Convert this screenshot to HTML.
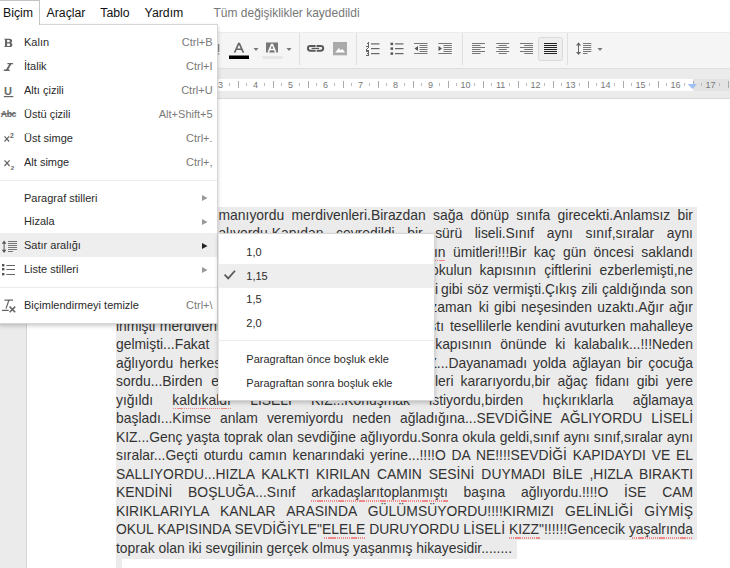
<!DOCTYPE html><html><head><meta charset="utf-8"><style>
*{margin:0;padding:0;box-sizing:border-box}
html,body{width:730px;height:568px;overflow:hidden;background:#fff;font-family:"Liberation Sans",sans-serif}
.t{position:absolute;white-space:nowrap}
.a{position:absolute}
</style></head><body>
<div class="a" style="left:0;top:99px;width:26px;height:469px;background:#ebebeb"></div>
<div class="a" style="left:26px;top:99px;width:1px;height:469px;background:#d4d4d4"></div>
<div class="a" style="left:116px;top:207px;width:581px;height:333.0px;background:#ebebeb"></div>
<div class="a" style="left:116px;top:540.0px;width:400.7px;height:18.5px;background:#ebebeb"></div>
<div class="a" style="left:116px;top:558.5px;width:6px;height:20px;background:#ebebeb"></div>
<div class="t" style="left:218.50px;top:205.63px;font-size:13.9px;line-height:18.5px;color:#333;width:474.50px;text-align:justify;text-align-last:justify;">manıyordu merdivenleri.Birazdan sağa dönüp sınıfa girecekti.Anlamsız bir</div>
<div class="t" style="left:218.40px;top:224.13px;font-size:13.9px;line-height:18.5px;color:#333;width:474.60px;text-align:justify;text-align-last:justify;">alıyordu.Kapıdan çevredildi bir sürü liseli.Sınıf aynı sınıf,sıralar aynı</div>
<div class="t" style="right:284.50px;top:242.63px;font-size:13.9px;line-height:18.5px;color:#333;text-align:right;white-space:nowrap;">umutların</div>
<div class="t" style="left:453.00px;top:242.63px;font-size:13.9px;line-height:18.5px;color:#333;width:240.00px;text-align:justify;text-align-last:justify;">ümitleri!!!Bir kaç gün öncesi saklandı</div>
<div class="t" style="right:258.00px;top:261.13px;font-size:13.9px;line-height:18.5px;color:#333;text-align:right;white-space:nowrap;">okulun</div>
<div class="t" style="left:479.50px;top:261.13px;font-size:13.9px;line-height:18.5px;color:#333;width:213.50px;text-align:justify;text-align-last:justify;">kapısının çiftlerini ezberlemişti,ne</div>
<div class="t" style="right:292.00px;top:279.63px;font-size:13.9px;line-height:18.5px;color:#333;text-align:right;white-space:nowrap;">yemini</div>
<div class="t" style="left:441.00px;top:279.63px;font-size:13.9px;line-height:18.5px;color:#333;width:252.00px;text-align:justify;text-align-last:justify;">gibi söz vermişti.Çıkış zili çaldığında son</div>
<div class="t" style="right:258.00px;top:298.13px;font-size:13.9px;line-height:18.5px;color:#333;text-align:right;white-space:nowrap;">zaman</div>
<div class="t" style="left:478.80px;top:298.13px;font-size:13.9px;line-height:18.5px;color:#333;width:214.20px;text-align:justify;text-align-last:justify;">ki gibi neşesinden uzaktı.Ağır ağır</div>
<div class="t" style="left:116.00px;top:316.63px;font-size:13.9px;line-height:18.5px;color:#333;white-space:nowrap;word-spacing:0.6px;white-space:nowrap;">inmişti merdivenlerden</div>
<div class="t" style="right:286.00px;top:316.63px;font-size:13.9px;line-height:18.5px;color:#333;text-align:right;white-space:nowrap;">ağlamıştı</div>
<div class="t" style="left:450.00px;top:316.63px;font-size:13.9px;line-height:18.5px;color:#333;width:243.00px;text-align:justify;text-align-last:justify;">tesellilerle kendini avuturken mahalleye</div>
<div class="t" style="left:116.00px;top:335.13px;font-size:13.9px;line-height:18.5px;color:#333;white-space:nowrap;word-spacing:8px;white-space:nowrap;">gelmişti...Fakat okulun</div>
<div class="t" style="left:435.20px;top:335.13px;font-size:13.9px;line-height:18.5px;color:#333;width:257.80px;text-align:justify;text-align-last:justify;">kapısının önünde ki kalabalık...!!!Neden</div>
<div class="t" style="left:116.00px;top:353.63px;font-size:13.9px;line-height:18.5px;color:#333;white-space:nowrap;word-spacing:2.5px;white-space:nowrap;">ağlıyordu herkes</div>
<div class="t" style="right:281.60px;top:353.63px;font-size:13.9px;line-height:18.5px;color:#333;text-align:right;white-space:nowrap;">KIZ...</div>
<div class="t" style="left:448.40px;top:353.63px;font-size:13.9px;line-height:18.5px;color:#333;width:244.60px;text-align:justify;text-align-last:justify;">Dayanamadı yolda ağlayan bir çocuğa</div>
<div class="t" style="left:116.00px;top:372.13px;font-size:13.9px;line-height:18.5px;color:#333;white-space:nowrap;word-spacing:5px;white-space:nowrap;">sordu...Birden etraf</div>
<div class="t" style="right:276.50px;top:372.13px;font-size:13.9px;line-height:18.5px;color:#333;text-align:right;white-space:nowrap;">gözleri</div>
<div class="t" style="left:460.50px;top:372.13px;font-size:13.9px;line-height:18.5px;color:#333;width:232.50px;text-align:justify;text-align-last:justify;">kararıyordu,bir ağaç fidanı gibi yere</div>
<div class="t" style="left:116.00px;top:390.63px;font-size:13.9px;line-height:18.5px;color:#333;width:577.00px;text-align:justify;text-align-last:justify;">yığıldı kaldıkaldı LİSELİ KIZ...Konuşmak istiyordu,birden hıçkırıklarla ağlamaya</div>
<div class="t" style="left:116.00px;top:409.13px;font-size:13.9px;line-height:18.5px;color:#333;width:577.00px;text-align:justify;text-align-last:justify;">başladı...Kimse anlam veremiyordu neden ağladığına...SEVDİĞİNE AĞLIYORDU LİSELİ</div>
<div class="t" style="left:116.00px;top:427.63px;font-size:13.9px;line-height:18.5px;color:#333;width:577.00px;text-align:justify;text-align-last:justify;">KIZ...Genç yaşta toprak olan sevdiğine ağlıyordu.Sonra okula geldi,sınıf aynı sınıf,sıralar aynı</div>
<div class="t" style="left:116.00px;top:446.13px;font-size:13.9px;line-height:18.5px;color:#333;width:577.00px;text-align:justify;text-align-last:justify;">sıralar...Geçti oturdu camın kenarındaki yerine...!!!!O DA NE!!!!SEVDİĞİ KAPIDAYDI VE EL</div>
<div class="t" style="left:116.00px;top:464.63px;font-size:13.9px;line-height:18.5px;color:#333;width:577.00px;text-align:justify;text-align-last:justify;">SALLIYORDU...HIZLA KALKTI KIRILAN CAMIN SESİNİ DUYMADI BİLE ,HIZLA BIRAKTI</div>
<div class="t" style="left:116.00px;top:483.13px;font-size:13.9px;line-height:18.5px;color:#333;width:577.00px;text-align:justify;text-align-last:justify;">KENDİNİ BOŞLUĞA...Sınıf arkadaşlarıtoplanmıştı başına ağlıyordu.!!!!O İSE CAM</div>
<div class="t" style="left:116.00px;top:501.63px;font-size:13.9px;line-height:18.5px;color:#333;width:577.00px;text-align:justify;text-align-last:justify;">KIRIKLARIYLA KANLAR ARASINDA GÜLÜMSÜYORDU!!!!KIRMIZI GELİNLİĞİ GİYMİŞ</div>
<div class="t" style="left:116.00px;top:520.13px;font-size:13.9px;line-height:18.5px;color:#333;width:577.00px;text-align:justify;text-align-last:justify;">OKUL KAPISINDA SEVDİĞİYLE&quot;ELELE DURUYORDU LİSELİ KIZZ&quot;!!!!!!Gencecik yaşalrında</div>
<div class="t" style="left:116.00px;top:538.63px;font-size:13.9px;line-height:18.5px;color:#333;white-space:nowrap;">toprak olan iki sevgilinin gerçek olmuş yaşanmış hikayesidir........</div>
<div class="a" style="left:433.0px;top:259.5px;width:12.0px;height:1.6px;opacity:.6;background:repeating-linear-gradient(to right,#f04848 0 1.3px,transparent 1.3px 2.1px)"></div>
<div class="a" style="left:172.6px;top:407.5px;width:58.4px;height:1.6px;opacity:.6;background:repeating-linear-gradient(to right,#f04848 0 1.3px,transparent 1.3px 2.1px)"></div>
<div class="a" style="left:311.4px;top:500.0px;width:137.1px;height:1.6px;opacity:.6;background:repeating-linear-gradient(to right,#f04848 0 1.3px,transparent 1.3px 2.1px)"></div>
<div class="a" style="left:323.7px;top:537.0px;width:41.9px;height:1.6px;opacity:.6;background:repeating-linear-gradient(to right,#f04848 0 1.3px,transparent 1.3px 2.1px)"></div>
<div class="a" style="left:508.9px;top:537.0px;width:30.8px;height:1.6px;opacity:.6;background:repeating-linear-gradient(to right,#f04848 0 1.3px,transparent 1.3px 2.1px)"></div>
<div class="a" style="left:632.2px;top:537.0px;width:60.4px;height:1.6px;opacity:.6;background:repeating-linear-gradient(to right,#f04848 0 1.3px,transparent 1.3px 2.1px)"></div>
<div class="a" style="left:0;top:0;width:730px;height:32px;background:#fff"></div>
<div class="t" style="left:3.00px;top:4.64px;font-size:12.3px;line-height:17px;color:#111;transform:scaleY(1.03);transform-origin:0 12.76px;">Biçim</div>
<div class="t" style="left:46.50px;top:4.64px;font-size:12.3px;line-height:17px;color:#111;transform:scaleY(1.03);transform-origin:0 12.76px;">Araçlar</div>
<div class="t" style="left:100.30px;top:4.64px;font-size:12.3px;line-height:17px;color:#111;transform:scaleY(1.03);transform-origin:0 12.76px;">Tablo</div>
<div class="t" style="left:144.60px;top:4.64px;font-size:12.3px;line-height:17px;color:#111;transform:scaleY(1.03);transform-origin:0 12.76px;">Yardım</div>
<div class="t" style="left:213.50px;top:4.54px;font-size:12px;line-height:17px;color:#777;transform:scaleY(1.05);transform-origin:0 12.66px;">Tüm değişiklikler kaydedildi</div>
<div class="a" style="left:0;top:32px;width:730px;height:37px;background:#f5f5f5;border-top:1px solid #ececec;border-bottom:1px solid #e0e0e0"></div>
<div class="a" style="left:0;top:69px;width:730px;height:30px;background:#ebebeb;border-bottom:1px solid #d8d8d8"></div>
<div class="a" style="left:26px;top:78.5px;width:704px;height:12.3px;background:#e3e3e3"></div>
<div class="a" style="left:116px;top:78.5px;width:576.5px;height:12.3px;background:#fff"></div>
<svg class="a" style="left:0;top:0" width="730" height="100"><rect x="229" y="83" width="1" height="3" fill="#bbb"/><rect x="238" y="81" width="1" height="7" fill="#aaa"/><rect x="246" y="83" width="1" height="3" fill="#bbb"/><rect x="264" y="83" width="1" height="3" fill="#bbb"/><rect x="273" y="81" width="1" height="7" fill="#aaa"/><rect x="281" y="83" width="1" height="3" fill="#bbb"/><rect x="299" y="83" width="1" height="3" fill="#bbb"/><rect x="308" y="81" width="1" height="7" fill="#aaa"/><rect x="316" y="83" width="1" height="3" fill="#bbb"/><rect x="334" y="83" width="1" height="3" fill="#bbb"/><rect x="343" y="81" width="1" height="7" fill="#aaa"/><rect x="351" y="83" width="1" height="3" fill="#bbb"/><rect x="369" y="83" width="1" height="3" fill="#bbb"/><rect x="378" y="81" width="1" height="7" fill="#aaa"/><rect x="386" y="83" width="1" height="3" fill="#bbb"/><rect x="404" y="83" width="1" height="3" fill="#bbb"/><rect x="413" y="81" width="1" height="7" fill="#aaa"/><rect x="421" y="83" width="1" height="3" fill="#bbb"/><rect x="439" y="83" width="1" height="3" fill="#bbb"/><rect x="448" y="81" width="1" height="7" fill="#aaa"/><rect x="456" y="83" width="1" height="3" fill="#bbb"/><rect x="474" y="83" width="1" height="3" fill="#bbb"/><rect x="483" y="81" width="1" height="7" fill="#aaa"/><rect x="491" y="83" width="1" height="3" fill="#bbb"/><rect x="509" y="83" width="1" height="3" fill="#bbb"/><rect x="518" y="81" width="1" height="7" fill="#aaa"/><rect x="526" y="83" width="1" height="3" fill="#bbb"/><rect x="544" y="83" width="1" height="3" fill="#bbb"/><rect x="553" y="81" width="1" height="7" fill="#aaa"/><rect x="561" y="83" width="1" height="3" fill="#bbb"/><rect x="579" y="83" width="1" height="3" fill="#bbb"/><rect x="588" y="81" width="1" height="7" fill="#aaa"/><rect x="596" y="83" width="1" height="3" fill="#bbb"/><rect x="614" y="83" width="1" height="3" fill="#bbb"/><rect x="623" y="81" width="1" height="7" fill="#aaa"/><rect x="631" y="83" width="1" height="3" fill="#bbb"/><rect x="649" y="83" width="1" height="3" fill="#bbb"/><rect x="658" y="81" width="1" height="7" fill="#aaa"/><rect x="666" y="83" width="1" height="3" fill="#bbb"/><rect x="684" y="83" width="1" height="3" fill="#bbb"/><rect x="693" y="81" width="1" height="7" fill="#aaa"/><rect x="701" y="83" width="1" height="3" fill="#bbb"/><rect x="719" y="83" width="1" height="3" fill="#bbb"/><rect x="728" y="81" width="1" height="7" fill="#aaa"/><polygon points="687.8,84 697,84 692.4,89" fill="#9fbff5"/></svg>
<div class="t" style="left:200.60px;top:78.68px;font-size:9px;line-height:13px;color:#777;width:40.00px;text-align:center;">3</div>
<div class="t" style="left:235.60px;top:78.68px;font-size:9px;line-height:13px;color:#777;width:40.00px;text-align:center;">4</div>
<div class="t" style="left:270.60px;top:78.68px;font-size:9px;line-height:13px;color:#777;width:40.00px;text-align:center;">5</div>
<div class="t" style="left:305.60px;top:78.68px;font-size:9px;line-height:13px;color:#777;width:40.00px;text-align:center;">6</div>
<div class="t" style="left:340.60px;top:78.68px;font-size:9px;line-height:13px;color:#777;width:40.00px;text-align:center;">7</div>
<div class="t" style="left:375.60px;top:78.68px;font-size:9px;line-height:13px;color:#777;width:40.00px;text-align:center;">8</div>
<div class="t" style="left:410.60px;top:78.68px;font-size:9px;line-height:13px;color:#777;width:40.00px;text-align:center;">9</div>
<div class="t" style="left:445.60px;top:78.68px;font-size:9px;line-height:13px;color:#777;width:40.00px;text-align:center;">10</div>
<div class="t" style="left:480.60px;top:78.68px;font-size:9px;line-height:13px;color:#777;width:40.00px;text-align:center;">11</div>
<div class="t" style="left:515.60px;top:78.68px;font-size:9px;line-height:13px;color:#777;width:40.00px;text-align:center;">12</div>
<div class="t" style="left:550.60px;top:78.68px;font-size:9px;line-height:13px;color:#777;width:40.00px;text-align:center;">13</div>
<div class="t" style="left:585.60px;top:78.68px;font-size:9px;line-height:13px;color:#777;width:40.00px;text-align:center;">14</div>
<div class="t" style="left:620.60px;top:78.68px;font-size:9px;line-height:13px;color:#777;width:40.00px;text-align:center;">15</div>
<div class="t" style="left:655.60px;top:78.68px;font-size:9px;line-height:13px;color:#777;width:40.00px;text-align:center;">16</div>
<div class="t" style="left:690.60px;top:78.68px;font-size:9px;line-height:13px;color:#777;width:40.00px;text-align:center;">17</div>
<svg class="a" style="left:0;top:0" width="730" height="70"><rect x="218" y="44" width="1.3" height="8" fill="#888"/><rect x="218" y="53.2" width="1.3" height="1.3" fill="#888"/><path d="M234.6,52.6 L238.6,43.6 L239.4,43.6 L243.4,52.6 M236.3,49.3 L241.7,49.3" stroke="#666" stroke-width="1.6" fill="none"/><rect x="229" y="55.5" width="20" height="3.5" fill="#000"/><polygon points="253.5,48 258.5,48 256,51" fill="#777"/><rect x="266" y="42.5" width="12" height="10" fill="#777"/><path d="M268.2,52.6 L271.6,44.4 L272.4,44.4 L275.8,52.6 M269.6,49.4 L274.4,49.4" stroke="#fff" stroke-width="1.5" fill="none"/><rect x="262.5" y="56" width="20" height="3" fill="#e6e6e6"/><polygon points="286.5,48 291.5,48 289,51" fill="#777"/><rect x="299.0" y="33" width="1" height="32" fill="#e0e0e0"/><rect x="356.0" y="33" width="1" height="32" fill="#e0e0e0"/><rect x="462.0" y="33" width="1" height="32" fill="#e0e0e0"/><rect x="567.0" y="33" width="1" height="32" fill="#e0e0e0"/><path d="M315.6,45.9 H310.35 A2.45,2.45 0 0 0 310.35,50.8 H315.6 M316.6,45.9 H320.75 A2.45,2.45 0 0 1 320.75,50.8 H316.6" stroke="#5a5a5a" stroke-width="2" fill="none"/><rect x="311.6" y="47.8" width="7.5" height="1.2" fill="#5a5a5a"/><rect x="333" y="42" width="14" height="13.3" fill="#aaa"/><polygon points="335.2,52.6 338.9,47.9 340.5,50.2 342.5,49 345.1,52.6" fill="#fff"/><path fill="#666" d="M368,42h1v4h-1z M367,43h1v1h-1z M366,46h3v1h-3z M368,47h1v1h-1z M367,48h1v1h-1z M366,49h1v1h-1z M366,50h3v1h-3z M366,51h3v1h-3z M368,52h1v3h-1z M367,53h1v1h-1z M366,55h3v1h-3z"/><rect x="371" y="43.3" width="8.5" height="1.2" fill="#666"/><rect x="390.5" y="42.699999999999996" width="2.6" height="2.4" fill="#555"/><rect x="395" y="43.3" width="8.5" height="1.2" fill="#666"/><rect x="371" y="48" width="8.5" height="1.2" fill="#666"/><rect x="390.5" y="47.4" width="2.6" height="2.4" fill="#555"/><rect x="395" y="48" width="8.5" height="1.2" fill="#666"/><rect x="371" y="53" width="8.5" height="1.2" fill="#666"/><rect x="390.5" y="52.4" width="2.6" height="2.4" fill="#555"/><rect x="395" y="53" width="8.5" height="1.2" fill="#666"/><rect x="414" y="43" width="13.5" height="1" fill="#777"/><rect x="438.3" y="43" width="13.5" height="1" fill="#777"/><rect x="419.5" y="45" width="8" height="1" fill="#777"/><rect x="443.5" y="45" width="8.3" height="1" fill="#777"/><rect x="419.5" y="47" width="8" height="1" fill="#777"/><rect x="443.5" y="47" width="8.3" height="1" fill="#777"/><rect x="419.5" y="49" width="8" height="1" fill="#777"/><rect x="443.5" y="49" width="8.3" height="1" fill="#777"/><rect x="419.5" y="51" width="8" height="1" fill="#777"/><rect x="443.5" y="51" width="8.3" height="1" fill="#777"/><rect x="414" y="53" width="13.5" height="1" fill="#777"/><rect x="438.3" y="53" width="13.5" height="1" fill="#777"/><polygon points="418,46 418,51 414.5,48.5" fill="#555"/><polygon points="438.5,46 438.5,51 442,48.5" fill="#555"/><rect x="472" y="43" width="13" height="1" fill="#777"/><rect x="496.2" y="43" width="13" height="1" fill="#777"/><rect x="520" y="43" width="13" height="1" fill="#777"/><rect x="472" y="45" width="8.5" height="1" fill="#777"/><rect x="498.7" y="45" width="8" height="1" fill="#777"/><rect x="524.2" y="45" width="8.8" height="1" fill="#777"/><rect x="472" y="47" width="13" height="1" fill="#777"/><rect x="496.2" y="47" width="13" height="1" fill="#777"/><rect x="520" y="47" width="13" height="1" fill="#777"/><rect x="472" y="49" width="8.5" height="1" fill="#777"/><rect x="498.7" y="49" width="8" height="1" fill="#777"/><rect x="524.2" y="49" width="8.8" height="1" fill="#777"/><rect x="472" y="51" width="13" height="1" fill="#777"/><rect x="496.2" y="51" width="13" height="1" fill="#777"/><rect x="520" y="51" width="13" height="1" fill="#777"/><rect x="472" y="53" width="8.5" height="1" fill="#777"/><rect x="498.7" y="53" width="8" height="1" fill="#777"/><rect x="524.2" y="53" width="8.8" height="1" fill="#777"/><rect x="538.5" y="37.5" width="24" height="23" rx="2" fill="#eeeeee" stroke="#dadada" stroke-width="1"/><rect x="544" y="43" width="13" height="1" fill="#222"/><rect x="544" y="45" width="13" height="1" fill="#222"/><rect x="544" y="47" width="13" height="1" fill="#222"/><rect x="544" y="49" width="13" height="1" fill="#222"/><rect x="544" y="51" width="13" height="1" fill="#222"/><rect x="544" y="53" width="13" height="1" fill="#222"/><rect x="578" y="44" width="1" height="10" fill="#666"/><polygon points="576,45.6 581.2,45.6 578.5,42.2" fill="#666"/><polygon points="576,52 581.2,52 578.5,55" fill="#666"/><rect x="583" y="43" width="8.3" height="1" fill="#777"/><rect x="583" y="45" width="8.3" height="1" fill="#777"/><rect x="583" y="47" width="8.3" height="1" fill="#777"/><rect x="583" y="49" width="8.3" height="1" fill="#777"/><rect x="583" y="51" width="8.3" height="1" fill="#777"/><rect x="583" y="53" width="4.5" height="1" fill="#777"/><polygon points="597.5,48 602.5,48 600,51" fill="#777"/></svg>
<div class="a" style="left:-1px;top:24px;width:219px;height:300px;background:#fff;border:1px solid #d6d6d6;box-shadow:0 2px 4px rgba(0,0,0,.2)"></div>
<div class="a" style="left:-1px;top:0;width:41px;height:25px;background:#fff;border:1px solid #c4c4c4;border-bottom:none"></div>
<div class="t" style="left:3.00px;top:4.64px;font-size:12.3px;line-height:17px;color:#111;transform:scaleY(1.03);transform-origin:0 12.76px;">Biçim</div>
<div class="a" style="left:0;top:233px;width:217px;height:24px;background:#eeeeee"></div>
<div class="a" style="left:0;top:180px;width:217px;height:1px;background:#ebebeb"></div>
<div class="a" style="left:0;top:287px;width:217px;height:1px;background:#ebebeb"></div>
<div class="t" style="left:24.00px;top:35.19px;font-size:11px;line-height:15px;color:#2a2a2a;transform:scaleY(1.05);transform-origin:0 11.31px;">Kalın</div>
<div class="t" style="right:517.40px;top:35.19px;font-size:11px;line-height:15px;color:#7a7a7a;text-align:right;transform:scaleY(1.05);transform-origin:0 11.31px;">Ctrl+B</div>
<div class="t" style="left:24.00px;top:59.19px;font-size:11px;line-height:15px;color:#2a2a2a;transform:scaleY(1.05);transform-origin:0 11.31px;">İtalik</div>
<div class="t" style="right:517.40px;top:59.19px;font-size:11px;line-height:15px;color:#7a7a7a;text-align:right;transform:scaleY(1.05);transform-origin:0 11.31px;">Ctrl+I</div>
<div class="t" style="left:24.00px;top:83.19px;font-size:11px;line-height:15px;color:#2a2a2a;transform:scaleY(1.05);transform-origin:0 11.31px;">Altı çizili</div>
<div class="t" style="right:517.40px;top:83.19px;font-size:11px;line-height:15px;color:#7a7a7a;text-align:right;transform:scaleY(1.05);transform-origin:0 11.31px;">Ctrl+U</div>
<div class="t" style="left:24.00px;top:107.19px;font-size:11px;line-height:15px;color:#2a2a2a;transform:scaleY(1.05);transform-origin:0 11.31px;">Üstü çizili</div>
<div class="t" style="right:517.40px;top:107.19px;font-size:11px;line-height:15px;color:#7a7a7a;text-align:right;transform:scaleY(1.05);transform-origin:0 11.31px;">Alt+Shift+5</div>
<div class="t" style="left:24.00px;top:131.19px;font-size:11px;line-height:15px;color:#2a2a2a;transform:scaleY(1.05);transform-origin:0 11.31px;">Üst simge</div>
<div class="t" style="right:517.40px;top:131.19px;font-size:11px;line-height:15px;color:#7a7a7a;text-align:right;transform:scaleY(1.05);transform-origin:0 11.31px;">Ctrl+.</div>
<div class="t" style="left:24.00px;top:155.19px;font-size:11px;line-height:15px;color:#2a2a2a;transform:scaleY(1.05);transform-origin:0 11.31px;">Alt simge</div>
<div class="t" style="right:517.40px;top:155.19px;font-size:11px;line-height:15px;color:#7a7a7a;text-align:right;transform:scaleY(1.05);transform-origin:0 11.31px;">Ctrl+,</div>
<div class="t" style="left:24.00px;top:190.99px;font-size:11px;line-height:15px;color:#2a2a2a;transform:scaleY(1.05);transform-origin:0 11.31px;">Paragraf stilleri</div>
<div class="t" style="left:24.00px;top:214.19px;font-size:11px;line-height:15px;color:#2a2a2a;transform:scaleY(1.05);transform-origin:0 11.31px;">Hizala</div>
<div class="t" style="left:24.00px;top:238.19px;font-size:11px;line-height:15px;color:#2a2a2a;transform:scaleY(1.05);transform-origin:0 11.31px;">Satır aralığı</div>
<div class="t" style="left:24.00px;top:262.19px;font-size:11px;line-height:15px;color:#2a2a2a;transform:scaleY(1.05);transform-origin:0 11.31px;">Liste stilleri</div>
<div class="t" style="left:24.00px;top:298.19px;font-size:11px;line-height:15px;color:#2a2a2a;transform:scaleY(1.05);transform-origin:0 11.31px;">Biçimlendirmeyi temizle</div>
<div class="t" style="right:517.40px;top:298.19px;font-size:11px;line-height:15px;color:#7a7a7a;text-align:right;transform:scaleY(1.05);transform-origin:0 11.31px;">Ctrl+\</div>
<svg class="a" style="left:0;top:0" width="220" height="330"><polygon points="202,195 202,201 207.5,198" fill="#999"/><polygon points="202,219 202,225 207.5,222" fill="#999"/><polygon points="202,243 202,249 207.5,246" fill="#222"/><polygon points="202,267 202,273 207.5,270" fill="#999"/><path fill-rule="evenodd" fill="#666" d="M4.2,38.8 H9.6 C11.4,38.8 12.1,39.8 12.1,40.9 C12.1,41.8 11.5,42.5 10.7,42.8 C11.8,43.1 12.4,43.9 12.4,44.9 C12.4,46.2 11.5,47 9.8,47 H4.2 V46.2 H5 V39.6 H4.2 Z M7.1,39.9 H8.9 C9.5,39.9 9.8,40.4 9.8,41 C9.8,41.7 9.5,42.2 8.9,42.2 H7.1 Z M7.1,43.4 H9.1 C9.8,43.4 10.1,44 10.1,44.7 C10.1,45.4 9.8,45.9 9.1,45.9 H7.1 Z"/><path fill="#666" d="M7.4,62.9 H13.1 V64.2 H7.4 Z M3.8,69.6 H9.6 V70.9 H3.8 Z M9.4,64 H11.6 L8.1,69.8 H5.9 Z"/><text x="4" y="95" font-family="Liberation Sans" font-weight="bold" font-size="11" fill="#666">U</text><rect x="3.8" y="96" width="9.5" height="1.2" fill="#666"/><text x="0.8" y="117" font-family="Liberation Sans" font-weight="bold" font-size="8.8" fill="#666" letter-spacing="-0.5">Abc</text><rect x="0.8" y="113.3" width="14.8" height="1" fill="#666"/><path d="M4.5,136.3 L9.2,141.5 M9.2,136.3 L4.5,141.5" stroke="#666" stroke-width="1.2"/><text x="10" y="138.3" font-family="Liberation Sans" font-weight="bold" font-size="6.8" fill="#666">2</text><path d="M4.5,160.3 L9.6,166 M9.6,160.3 L4.5,166" stroke="#666" stroke-width="1.2"/><text x="10.8" y="169.5" font-family="Liberation Sans" font-weight="bold" font-size="6" fill="#666">2</text><rect x="3.6" y="242.5" width="1" height="8.5" fill="#555"/><polygon points="1.8,243.8 6.4,243.8 4.1,240.6" fill="#555"/><polygon points="1.8,249.8 6.4,249.8 4.1,253" fill="#555"/><rect x="8" y="241" width="9" height="1" fill="#777"/><rect x="8" y="243" width="9" height="1" fill="#777"/><rect x="8" y="245" width="9" height="1" fill="#777"/><rect x="8" y="247" width="9" height="1" fill="#777"/><rect x="8" y="249" width="9" height="1" fill="#777"/><rect x="8" y="251" width="5" height="1" fill="#777"/><rect x="2" y="264" width="2.4" height="2.4" fill="#555"/><rect x="6.3" y="265" width="8.7" height="1" fill="#666"/><rect x="2" y="268" width="2.4" height="2.4" fill="#555"/><rect x="6.3" y="269" width="8.7" height="1" fill="#666"/><rect x="2" y="273" width="2.4" height="2.4" fill="#555"/><rect x="6.3" y="274" width="8.7" height="1" fill="#666"/><path d="M4.5,300.2 L13,300.2 M8.8,300.5 L6,308.6 M2,310.4 L8.7,310.4" stroke="#666" stroke-width="1.2" fill="none"/><path d="M9.6,306.6 L15.2,312.2 M15.2,306.6 L9.6,312.2" stroke="#666" stroke-width="1.5"/></svg>
<div class="a" style="left:218px;top:233px;width:217px;height:168px;background:#fff;border:1px solid #d6d6d6;border-left-color:#e6e6e6;box-shadow:0 2px 4px rgba(0,0,0,.2)"></div>
<div class="a" style="left:219px;top:264px;width:215px;height:24px;background:#eeeeee"></div>
<div class="a" style="left:219px;top:340px;width:215px;height:1px;background:#ebebeb"></div>
<div class="t" style="left:246.30px;top:245.19px;font-size:11px;line-height:15px;color:#2a2a2a;transform:scaleY(1.05);transform-origin:0 11.31px;">1,0</div>
<div class="t" style="left:246.30px;top:269.29px;font-size:11px;line-height:15px;color:#2a2a2a;transform:scaleY(1.05);transform-origin:0 11.31px;">1,15</div>
<div class="t" style="left:246.30px;top:292.39px;font-size:11px;line-height:15px;color:#2a2a2a;transform:scaleY(1.05);transform-origin:0 11.31px;">1,5</div>
<div class="t" style="left:246.30px;top:316.19px;font-size:11px;line-height:15px;color:#2a2a2a;transform:scaleY(1.05);transform-origin:0 11.31px;">2,0</div>
<div class="t" style="left:246.30px;top:352.09px;font-size:11px;line-height:15px;color:#2a2a2a;transform:scaleY(1.05);transform-origin:0 11.31px;">Paragraftan önce boşluk ekle</div>
<div class="t" style="left:246.30px;top:376.39px;font-size:11px;line-height:15px;color:#2a2a2a;transform:scaleY(1.05);transform-origin:0 11.31px;">Paragraftan sonra boşluk ekle</div>
<svg class="a" style="left:0;top:0" width="440" height="400"><path d="M224.6,274.6 L228.2,278.4 L235,270.8" stroke="#555" stroke-width="1.7" fill="none"/></svg>
</body></html>
